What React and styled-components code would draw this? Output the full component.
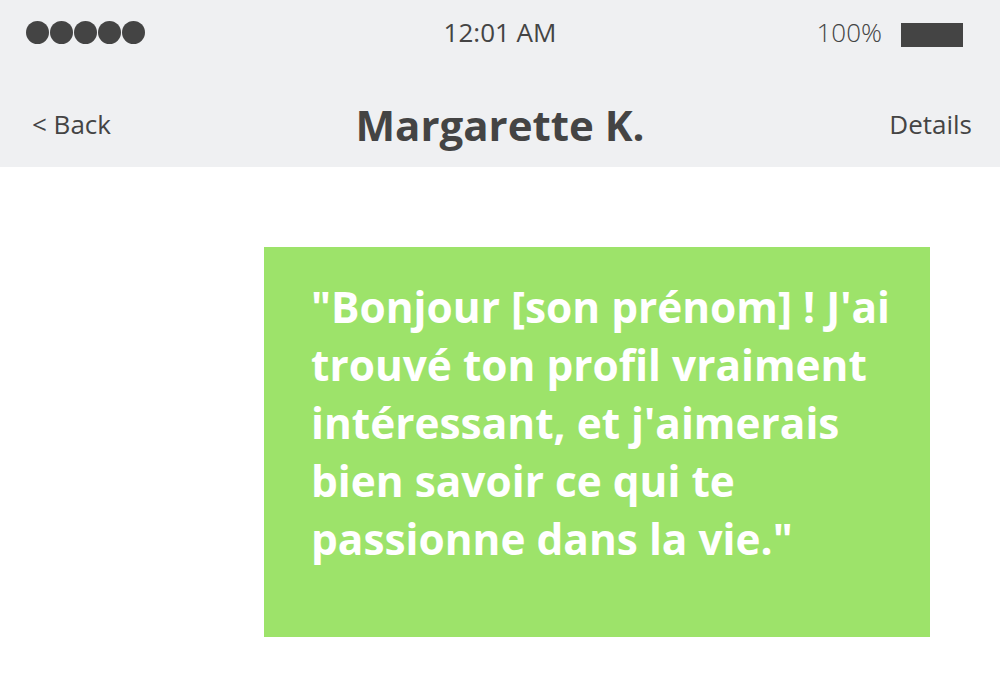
import React from 'react';
import styled, { createGlobalStyle } from 'styled-components';

const GlobalStyle = createGlobalStyle`
  html, body {
    margin: 0;
    padding: 0;
    background: #ffffff;
  }
  body {
    font-family: 'Open Sans', 'Noto Sans', sans-serif;
  }
`;

const Screen = styled.div`
  width: 1000px;
  height: 700px;
  overflow: hidden;
  background: #ffffff;
`;

const Header = styled.div`
  background: #eff0f2;
  height: 167px;
  display: flex;
  flex-direction: column;
`;

const StatusBar = styled.div`
  display: grid;
  grid-template-columns: 1fr auto 1fr;
  align-items: center;
  height: 64px;
  padding: 0 26px;
  color: #444444;
`;

const Signal = styled.div`
  display: flex;
`;

const Dot = styled.span`
  width: 23px;
  height: 23px;
  border-radius: 50%;
  background: #444444;
  margin-right: 1px;
`;

const Clock = styled.div`
  font-size: 26px;
  font-weight: 400;
`;

const Battery = styled.div`
  display: flex;
  align-items: center;
  justify-content: flex-end;
  gap: 19px;
  padding-right: 11px;
  font-size: 26px;
  font-weight: 300;
`;

const BatteryBar = styled.span`
  width: 62px;
  height: 24px;
  background: #444444;
  margin-top: 6px;
`;

const NavBar = styled.div`
  flex: 1;
  display: grid;
  grid-template-columns: 1fr auto 1fr;
  align-items: center;
  padding: 17px 28px 0;
  color: #444444;
`;

const NavLink = styled.div`
  font-size: 26px;
  justify-self: ${(p) => (p.right ? 'end' : 'start')};
  padding-left: ${(p) => (p.right ? '0' : '4px')};
`;

const Title = styled.div`
  font-size: 42px;
  font-weight: 700;
`;

const Body = styled.div`
  display: flex;
  justify-content: flex-end;
  padding: 80px 70px 0 0;
`;

const Bubble = styled.div`
  width: 666px;
  height: 390px;
  box-sizing: border-box;
  background: #9de36a;
  color: #ffffff;
  padding: 31px 20px 0 47px;
  font-size: 42.4px;
  font-weight: 700;
  line-height: 58px;
`;

export default function App() {
  return (
    <Screen>
      <GlobalStyle />
      <Header>
        <StatusBar>
          <Signal>
            {[0, 1, 2, 3, 4].map((i) => (
              <Dot key={i} />
            ))}
          </Signal>
          <Clock>12:01 AM</Clock>
          <Battery>
            100%
            <BatteryBar />
          </Battery>
        </StatusBar>
        <NavBar>
          <NavLink>&lt; Back</NavLink>
          <Title>Margarette K.</Title>
          <NavLink right>Details</NavLink>
        </NavBar>
      </Header>
      <Body>
        <Bubble>
          "Bonjour [son prénom] ! J'ai trouvé ton profil vraiment intéressant, et j'aimerais bien savoir ce qui te passionne dans la vie."
        </Bubble>
      </Body>
    </Screen>
  );
}
